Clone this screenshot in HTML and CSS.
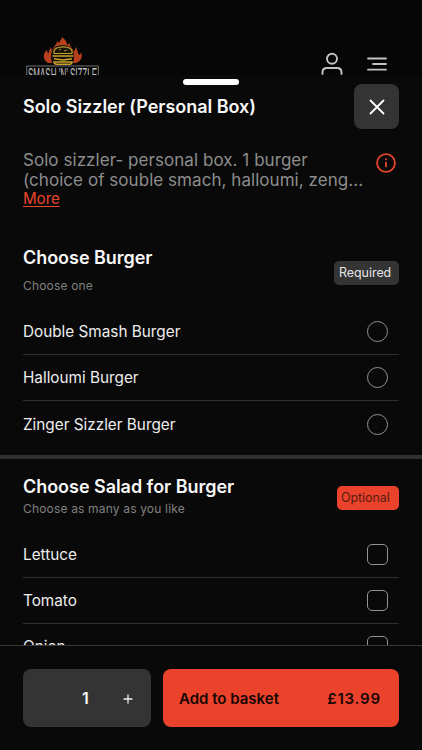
FILE: index.html
```html
<!DOCTYPE html>
<html lang="en">
<head>
<meta charset="utf-8">
<meta name="viewport" content="width=device-width, initial-scale=1">
<title>Solo Sizzler (Personal Box)</title>
<link rel="stylesheet" href="styles.css">
</head>
<body>
<div class="app">
  <header class="topbar">
    <svg class="logo" width="74" height="41" viewBox="0 0 74 41">
      <path d="M22 29C16 25 17 19 21 16L22 20L25 13L26 17C28 11 31 11 31 7L33 9C34 6 36 5 36 3C39 6 41 7 41 11L44 9C43 13 47 14 48 18L50 13C52 16 51 20 54 21L55 18C57 23 55 27 50 29Z" fill="#b8401f"/>
      <path d="M26 29C23 20 26 11 36.500 11C47 11 50 20 47 29Z" fill="#120d08"/>
      <path d="M28 19.500C27 14.500 32 12.800 37 12.800S47 14.500 46 19.500Z" fill="#171408" stroke="#c9a32b" stroke-width="1.200"/>
      <path d="M33 16L35 15M38 17L41 16" stroke="#c9a32b" stroke-width=".8"/>
      <path d="M26.500 22H47.500M28 24.800L37 26L46 24.800M28 28H46Q46 30.300 43.500 30.300H31Q28 30.300 28 28Z" fill="none" stroke="#c9a32b" stroke-width="1.500"/>
      <path d="M.7 41V32H72.300V41" fill="none" stroke="#8b8b8b" stroke-width=".8"/>
      <text class="logo-text" x="2" y="46.500" textLength="69" lengthAdjust="spacingAndGlyphs">SMASH ’N’ SIZZLE</text>
    </svg>
    <svg class="user" width="22" height="24" viewBox="0 0 22 24" fill="none" stroke="#c3c3c3" stroke-width="1.900" stroke-linecap="round">
      <circle cx="11" cy="6.800" r="5"/><path d="M1.500 22V20.500Q1.500 16 6 16H16Q20.500 16 20.500 20.500V22"/>
    </svg>
    <svg class="menu" width="20" height="16" viewBox="0 0 20 16" stroke="#c3c3c3" stroke-width="1.800" stroke-linecap="round">
      <path d="M1 2.500H19M6 8H19M1 13.700H19"/>
    </svg>
  </header>
  <main class="sheet">
    <div class="handle"></div>
    <div class="title-row">
      <h1 class="title">Solo Sizzler (Personal Box)</h1>
      <button class="close" aria-label="Close"><svg width="16" height="16" viewBox="0 0 16 16" stroke="#fff" stroke-width="1.800" stroke-linecap="round"><path d="M1.500 1.500L14.500 14.500M14.500 1.500L1.500 14.500"/></svg></button>
    </div>
    <section class="intro">
      <div class="desc">
        <p class="line">Solo sizzler- personal box. 1 burger</p>
        <p class="line">(choice of souble smach, halloumi, zeng...</p>
        <a class="more">More</a>
      </div>
      <svg class="info" width="20" height="20" viewBox="0 0 20 20" fill="none" stroke="#e6452b" stroke-width="1.800"><circle cx="10" cy="10" r="8.900"/><path d="M10 9V14.300M10 5.500V7.300"/></svg>
    </section>
    <section class="group burgers">
      <div class="group-head">
        <div><h2>Choose Burger</h2><p class="hint hint-one">Choose one</p></div>
        <span class="badge required">Required</span>
      </div>
      <label class="option"><span>Double Smash Burger</span><i class="radio"></i></label>
      <label class="option"><span>Halloumi Burger</span><i class="radio"></i></label>
      <label class="option last"><span>Zinger Sizzler Burger</span><i class="radio"></i></label>
    </section>
    <section class="group salads">
      <div class="group-head">
        <div><h2>Choose Salad for Burger</h2><p class="hint">Choose as many as you like</p></div>
        <span class="badge optional">Optional</span>
      </div>
      <label class="option"><span>Lettuce</span><i class="check"></i></label>
      <label class="option"><span>Tomato</span><i class="check"></i></label>
      <label class="option"><span>Onion</span><i class="check"></i></label>
    </section>
  </main>
  <footer class="bar">
    <div class="qty"><span></span><span class="count">1</span><svg class="plus" width="10" height="10" viewBox="0 0 10 10" stroke="#eee" stroke-width="1.300"><path d="M.5 5H9.500M5 .5V9.500"/></svg></div>
    <button class="add"><span>Add to basket</span><span class="price">£13.99</span></button>
  </footer>
</div>
</body>
</html>
```
FILE: styles.css
```css
* { box-sizing: border-box; margin: 0; padding: 0; }
body { background: #090909; font-family: Inter, "Liberation Sans", sans-serif; color: #f8f8f8; }
button { border: 0; font: inherit; }
.app { width: 422px; height: 750px; display: flex; flex-direction: column; overflow: hidden; }
.topbar { height: 75px; flex: none; background: #060606; display: flex; padding-left: 26px; overflow: hidden; }
.logo { margin-top: 34px; }
.logo-text { font: 400 18px "Liberation Sans", sans-serif; fill: #c4c4c4; }
.user { margin: 52px 0 0 221px; }
.menu { margin: 56px 0 0 24px; }
.sheet { flex: 1; min-height: 0; overflow: hidden; }
.handle { width: 56px; height: 6px; margin: 4px auto -1px; border-radius: 3px; background: #fff; }
.title-row { display: flex; justify-content: space-between; align-items: center; height: 45px; padding: 0 23px; }
.title { font-size: 18px; font-weight: 600; line-height: 24px; letter-spacing: -0.03px; white-space: nowrap; }
.close { width: 45px; height: 45px; border-radius: 8px; background: #343434; display: grid; place-items: center; }
.intro { display: flex; justify-content: space-between; padding: 21px 26px 0 23px; height: 100px; }
.line { font-size: 17px; line-height: 20px; letter-spacing: 0.05px; color: #8d8d8d; white-space: nowrap; }
.more { display: block; width: max-content; font-size: 15.2px; line-height: 18px; letter-spacing: -0.1px; color: #e6452b; text-decoration: underline; text-underline-offset: 2px; text-decoration-thickness: 1px; }
.info { margin-top: 3px; flex: none; }
.group { padding: 0 23px; }
.group-head { display: flex; justify-content: space-between; }
.burgers { height: 226px; padding-top: 17px; }
.burgers .group-head { height: 63px; }
.burgers .badge { margin-top: 15px; }
h2 { font-size: 18px; font-weight: 600; line-height: 24px; letter-spacing: -0.04px; white-space: nowrap; }
.hint { font-size: 12px; line-height: 16px; letter-spacing: 0.17px; color: #808080; white-space: nowrap; margin-top: 2px; }
.hint-one { margin-top: 8px; }
.badge { height: 24px; border-radius: 5px; font-size: 12.4px; line-height: 24px; padding-left: 4px; white-space: nowrap; }
.required { width: 65px; background: #343434; color: #e7e7e7; padding-left: 5px; }
.optional { width: 62px; background: #ea422b; color: #571b13; }
.option { height: 46px; display: flex; align-items: center; justify-content: space-between; padding-right: 11px; border-bottom: 1px solid #303030; font-size: 15.3px; color: #eee; white-space: nowrap; }
.option.last { border-bottom: 0; }
.radio, .check { width: 21px; height: 21px; border: 1px solid #929292; border-radius: 50%; }
.check { border-radius: 5px; }
.salads { border-top: 4px solid #303030; padding-top: 16px; }
.salads .group-head { height: 57px; }
.salads .badge { margin-top: 11px; }
.bar { flex: none; height: 105px; border-top: 1px solid #383838; padding: 23px 23px 0; display: flex; gap: 12px; background: #090909; }
.qty { width: 128px; height: 58px; flex: none; border-radius: 8px; background: #343434; display: grid; grid-template-columns: 40px 45px 1fr; align-items: center; justify-items: center; }
.count { font-size: 16px; font-weight: 600; }
.plus { margin: 2px 3px 0 0; }
.add { flex: 1; height: 58px; border-radius: 8px; background: #ea422b; color: #160604; display: flex; align-items: center; justify-content: space-between; padding: 0 19px 0 16px; font-size: 15px; font-weight: 600; white-space: nowrap; }
.price { letter-spacing: 0.8px; margin-right: -0.8px; }
```
